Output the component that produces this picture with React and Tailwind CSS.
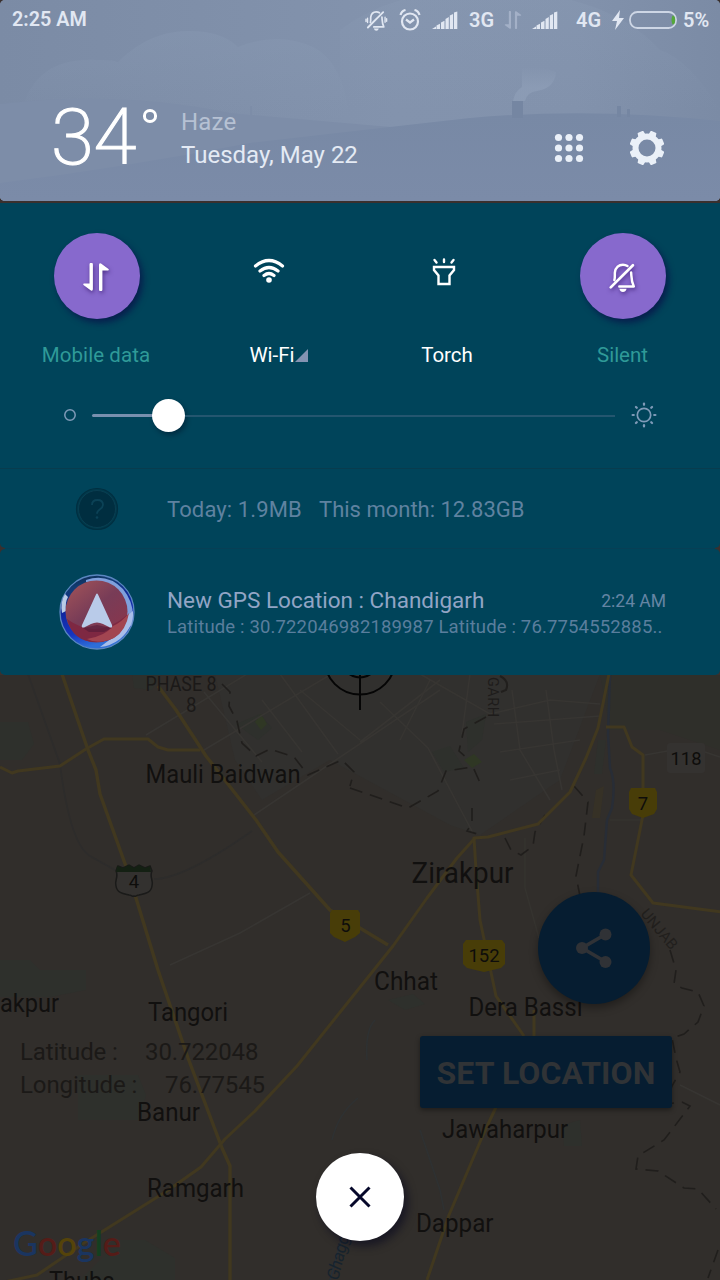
import React from "react";

const YELLOW = "#41381f";

const PLACES = [
  { t: "PHASE 8", x: 145.5, y: 691, s: 19.5, w: 71, c: "#1b1918" },
  { t: "8", x: 186, y: 712, s: 19.5, w: 10.5, c: "#1b1918" },
  { t: "Mauli Baidwan", x: 145.5, y: 783, s: 25.5, w: 155 },
  { t: "Zirakpur", x: 411.5, y: 883, s: 30, w: 102 },
  { t: "Chhat", x: 374, y: 990, s: 25.5, w: 64 },
  { t: "Dera Bassi", x: 468.500, y: 1016, s: 25.5, w: 114 },
  { t: "Tangori", x: 148, y: 1021, s: 25.5, w: 80 },
  { t: "akpur", x: 0, y: 1012, s: 25.5, w: 59 },
  { t: "Banur", x: 137, y: 1121, s: 25.5, w: 63 },
  { t: "Ramgarh", x: 147, y: 1197, s: 25.5, w: 97 },
  { t: "Jawaharpur", x: 442, y: 1138, s: 25.5, w: 126 },
  { t: "Dappar", x: 416, y: 1232, s: 25.5, w: 77.5 },
  { t: "Thuba", x: 49, y: 1290, s: 25.5, w: 66 },
];

function MapCanvas() {
  return (
    <svg className="absolute inset-0 h-full w-full font-['Roboto',sans-serif]" viewBox="0 0 720 1280">
      <rect width="720" height="1280" fill="#312e2b" />
      {/* urban area and greens */}
      <path d="M215 674H600L560 780 480 835 450 825 330 760 262 800 235 760Z" fill="#31302e" />
      <path d="M600 674H720V750L660 730 610 730Z" fill="#2f2f2a" />
      <g fill="#2e302c">
        <path d="M0 722h28l6 22-12 16H0z" />
        <path d="M0 960h30l10 10h46v20l-36 7H0z" />
        <path d="M78 1075h60l8 20-6 25H78z" />
        <path d="M120 1240h25l30 18v22H80z" />
        <path d="M132 674h28l-8 16-18-2zM236 724l24-10 12 14-14 12zM466 722l20-8-4 26-14 12zM432 752l18-6 14 22-20 4z" />
        <path d="M598 740h8l-4 34h-8zM562 1125l18-5 2 26h-18zM388 1000l25-6 12 10-20 6z" />
      </g>
      <path d="M255 722l6-8 6 10-6 6zM464 760l10-6 8 8-10 6z" fill="#2f3724" />
      <path d="M596 790l8-4-4 32h-8z" fill="#363126" />
      {/* minor streets */}
      <g fill="none" stroke="#373532" strokeWidth="1.6">
        <path d="M146 735 330 624M204 750 360 657M254 815 440 690M360 742 440 680M204 692 262 762M280 674 338 754M380 702l48 46 45 85M262 700l40 52M300 690l60 50" />
        <path d="M420 674l70 40 60-14 50 4M512 690l8 60 30 50M546 690l8 60 8 40M494 724l106-8M500 752l80-12M510 780l50-10M470 674l-8 60M430 680l-30 60" />
        <path d="M170 965l70-32 70-40M645 755l45-8 30 10" />
        <path d="M525 838v50l14 50M610 820h32" stroke="#35332f" />
        <path d="M28 674l32 90q10 80 30 92l25 14M154 879q30 0 98-48" stroke="#2d2c2b" />
        <path d="M420 1130l20 60 4 20M375 1020q-10 10-8 40M332 1140q6-26 26-42" stroke="#2e3132" />
        <path d="M680 1085l40 20" />
      </g>
      {/* river */}
      <path d="M610 674l-2 60 2 34q6 14 2 40l-5 12-3 40-6 12v20" fill="none" stroke="#282d36" strokeWidth="2.5" />
      <path d="M330 1280l14-50 10-40" fill="none" stroke="#273039" strokeWidth="1.5" />
      {/* boundary */}
      <g fill="none" stroke="#201e1c" strokeWidth="1.6" strokeDasharray="13 8">
        <path d="M222 684l8 8-1 14 8 15 5 22 14 13 14-7 24 8 14 18 34-15 12 12-4 14M350 788l58 20 30-17 8-20 27-4 8 18" />
        <path d="M486 717l-22 12-5 22 10 9M472 808v15l-5 8 14 4M505 838l6 12 10 5 12-9 2-14 10-17M574 786l14 16-4 34-8 40 4 20 8 20" />
        <path d="M670 950l6 20-2 14 8 4 16 4 6 14-6 16-14 12-12 4 4 20 4 14-8 14-6 18 16-2 8 4-26 34-26 16-2 13 22 2 26 17 14 1 18 20" />
        <path d="M718 1250l-10 28" />
      </g>
      {/* highways */}
      <g fill="none" stroke={YELLOW} strokeWidth="3" strokeLinejoin="round">
        <path d="M0 767l12 6 6-2 42-5 26-17 18-10h44l10 8 10 3h32" />
        <path d="M62 674l26 76 8 20 4 24 28 78 30 98 30 88 34 90 8 18v114" strokeWidth="3.400" />
        <path d="M158 686l18 24 30 46 50 64 22 32 52 58 58 35" strokeWidth="3.400" />
        <path d="M475 838l-18 20-30 40-34 48-48 60-48 60-42 45-30 28-24 28-34 24-80 50-50 34-37 8" />
        <path d="M609 674l-11 54-12 30-16 34-32 32-50 13-14 1 2 32 4 50 16 76 28 40" />
        <path d="M534 1010v30M497 1105l-14 30-34 80-22 65M606 727l18 0 8 20 11 8v60l-12 60 22 28 77 10" />
      </g>
      <g fill="#483d08">
        <path d="M631 788h24l2 4v17l-3 5-11 4-11-4-3-5v-17z" />
        <path d="M332 910h26l2 3v20l-5 4-10 5-11-5-4-4v-20z" />
        <path d="M466 940h36l3 4v20l-4 4-17 4-17-4-4-4v-20z" />
      </g>
      <rect x="667" y="743" width="38" height="30" rx="3" fill="#343230" />
      <path d="M118 866l5 2 6-3 5 3 5-3 6 3 5-2 2 5c-3 6 2 10 0 15-1 8-10 8-13 9-3 0-3 2-5 1-2 1-2-1-5-1-3-1-12-1-13-9-2-5 3-9 0-15z" fill="#33312f" stroke="#1a1a19" strokeWidth="1.500" />
      <path d="M117 866l6 2 6-3 5 3 5-3 6 3 5-2 1 6h-35z" fill="#142013" />
      <g fill="#0e0d0b" fontSize="18.5" textAnchor="middle">
        <text x="643" y="810">7</text>
        <text x="345.5" y="932">5</text>
        <text x="484" y="962">152</text>
        <text x="686" y="765" textLength="31" lengthAdjust="spacingAndGlyphs">118</text>
        <text x="134" y="888">4</text>
      </g>
      {PLACES.map((p) => (
        <text key={p.t} x={p.x} y={p.y} fontSize={p.s} fill={p.c || "#11100f"} textLength={p.w} lengthAdjust="spacingAndGlyphs">
          {p.t}
        </text>
      ))}
      <text transform="translate(488 677) rotate(90)" fontSize="14.5" fill="#1e1c1b" textLength="40">GARH</text>
      <text transform="translate(640 914) rotate(50)" fontSize="15" fill="#211f1d" textLength="48">UNJAB</text>
      <text transform="translate(338 1281) rotate(-76)" fontSize="17" fontStyle="italic" fill="#17232d" textLength="46">Ghagg</text>
      <path d="M500 676q10 5 6 14l-5 2" fill="none" stroke="#211f1d" strokeWidth="2" />
      {/* centre target */}
      <g fill="none" stroke="#050505" strokeWidth="2">
        <circle cx="360" cy="659" r="35.5" />
        <circle cx="360" cy="659" r="18.5" />
        <path d="M360 659v51" />
      </g>
      <text x="13" y="1256" className="font-['Lato',sans-serif]" fontSize="35" fontWeight="600" textLength="108" lengthAdjust="spacingAndGlyphs">
        <tspan fill="#1a3560">G</tspan>
        <tspan fill="#551c18">o</tspan>
        <tspan fill="#55430a">o</tspan>
        <tspan fill="#1a3560">g</tspan>
        <tspan fill="#143f20">l</tspan>
        <tspan fill="#551c18">e</tspan>
      </text>
    </svg>
  );
}

function MapApp() {
  return (
    <div className="absolute inset-0">
      <MapCanvas />
      <div className="relative flex h-full flex-col pt-[892px]">
        <div className="ml-[538px] flex h-28 w-28 items-center justify-center rounded-full bg-[#061d31] shadow-[0_4px_8px_rgba(0,0,0,0.35)]">
          <svg className="h-10 w-10" viewBox="0 0 40 40" fill="#303236">
            <path d="M32 6 8 20l24 14" fill="none" stroke="#303236" strokeWidth="3.6" />
            <circle cx="31.5" cy="6.500" r="6" />
            <circle cx="8" cy="20" r="6" />
            <circle cx="31.500" cy="34" r="6" />
          </svg>
        </div>
        <div className="mt-8 flex items-start pl-[20px]">
          <div className="w-[400px] whitespace-pre text-[24px] leading-[33px] tracking-[-0.1px] text-[#1b1917]">
            <div className="flex"><span className="w-[125px]">Latitude :</span><span>30.722048</span></div>
            <div className="flex"><span className="w-[145px]">Longitude :</span><span>76.77545</span></div>
          </div>
          <button className="h-[72px] w-[252px] rounded-[3px] bg-[#061d31] pt-[2px] text-[32px] font-bold tracking-[0.1px] text-[#303336] shadow-[0_2px_5px_rgba(0,0,0,0.4)]">
            SET LOCATION
          </button>
        </div>
      </div>
    </div>
  );
}

function BellOff({ className, waves }) {
  return (
    <svg className={className} viewBox="0 0 32 32" fill="none" stroke="currentColor" strokeWidth="2.700" strokeLinecap="round">
      <path d="M7 20C8 17 7.300 14 7.600 11.500 8.300 6 12 3 16.500 3q2.800 0 5 1.500" />
      <path d="M25.500 11.500c.5 4-.2 9 3 15.500H12.500" strokeLinejoin="round" />
      <path d="M27.500 3.500 3 28" strokeWidth="3" />
      <path d="M12.500 29.500h8q-1 3.500-4 3.500t-4-3.500z" fill="currentColor" stroke="none" />
      {waves && <path d="M2.500 13v7M0 14.500v4M30.500 11.500v8M33 14v4" strokeWidth="2.200" />}
    </svg>
  );
}

function DataArrows({ className }) {
  return (
    <svg className={className} viewBox="0 0 26 28" fill="currentColor">
      <path d="M6.500 1.500a1.700 1.700 0 0 1 3.400 0V26q0 2.500-2 1.500L.5 22q-.8-1 .5-1.500H6.500zM16 26.500a1.700 1.700 0 0 0 3.400 0V7.500h5.600q1.300-.5.5-1.500L18 .500q-2-1-2 1.500z" />
    </svg>
  );
}

function Signal() {
  return (
    <svg className="h-[19px] w-[26px] shrink-0" viewBox="0 0 26 19" fill="currentColor">
      <path d="M0 18l4-2.500V18zM4.500 14.500l3.500-1.700V18H4.500zM9 11.500l3.500-1.700V18H9zM13.500 8l3.300-2V18h-3.300zM17.800 4.500l3.300-1.500V18h-3.300zM22 1.500l3.300-1V18H22z" />
    </svg>
  );
}

function StatusBar() {
  return (
    <div className="relative flex h-10 items-center pl-3 text-[20px] font-semibold text-[#e1e7f2]">
      <span className="w-[354px] text-[19.8px]">2:25 AM</span>
      <BellOff className="h-[20px] w-[20px] overflow-visible" waves />
      <svg className="ml-[13px] h-[22px] w-[22px]" viewBox="0 0 22 22" fill="none" stroke="currentColor" strokeWidth="2.200">
        <circle cx="11" cy="12.500" r="8" />
        <path d="M7 10.500l4 3 4-3M1.500 6q1-4 5-5M20.500 6q-1-4-5-5" />
      </svg>
      <div className="ml-[11px]"><Signal /></div>
      <span className="ml-[11px] w-[35px]">3G</span>
      <DataArrows className="h-[18px] w-[18px] text-[#a3b0c7]" />
      <div className="ml-[10px]"><Signal /></div>
      <span className="ml-[18px] w-[36px]">4G</span>
      <svg className="h-[20px] w-[12px]" viewBox="0 0 12 20" fill="currentColor">
        <path d="M8 0 0 11h5L3 20l9-12H7z" />
      </svg>
      <svg className="ml-[5px] h-[18px] w-[48px]" viewBox="0 0 48 18">
        <rect x="1" y="1" width="46" height="16" rx="7.500" fill="none" stroke="#cdd6e5" strokeWidth="1.800" />
        <path d="M43.500 4.500q2.700 0 2.700 4.500t-2.700 4.500q-2-4.500 0-9z" fill="#54a83a" />
      </svg>
      <span className="ml-[6px]">5%</span>
    </div>
  );
}

function WeatherHeader() {
  return (
    <header className="relative h-[201px] overflow-hidden rounded-[5px] bg-[#7e8da7]">
      <svg className="absolute inset-0 h-full w-full" viewBox="0 0 720 201">
        <defs>
          <linearGradient id="sky" x1="0" x2="1">
            <stop offset="0" stopColor="#7b8ba5" />
            <stop offset=".55" stopColor="#8393ad" />
            <stop offset=".8" stopColor="#8292ac" />
            <stop offset="1" stopColor="#7b8ba5" />
          </linearGradient>
          <linearGradient id="land" x1="0" x2="0" y1="0" y2="1">
            <stop offset="0" stopColor="#7889a5" />
            <stop offset="1" stopColor="#7b8ba8" />
          </linearGradient>
          <linearGradient id="cloud" x1="0" x2="0" y1="0" y2="1">
            <stop offset="0" stopColor="#8b9cb5" stopOpacity=".32" />
            <stop offset="1" stopColor="#8b9cb5" stopOpacity="0" />
          </linearGradient>
          <linearGradient id="smoke" x1="0" x2="0" y1="0" y2="1">
            <stop offset="0" stopColor="#8d9db6" stopOpacity="0" />
            <stop offset=".6" stopColor="#8d9db6" stopOpacity=".8" />
          </linearGradient>
        </defs>
        <rect width="720" height="201" fill="url(#sky)" />
        <path d="M20 120Q30 55 100 60q14 0 18 2Q150 30 190 31q32 0 48 16 40-16 75 0 30 14 37 73z" fill="url(#cloud)" />
        <path d="M340 30Q400-15 500-10q110 5 160 60 30 10 60 60H340z" fill="url(#cloud)" />
        <path d="M0 104Q120 90 230 113l20 2v-9h2v9l150 13 318 20v53H0z" fill="#7d8da8" />
        <path d="M0 201v-18q120-15 250-40Q380 128 470 118 590 107 720 121v80z" fill="url(#land)" />
        <path d="M512 101h11v17h-11zM617 106h4v11h-4zM627 109h3v8h-3z" fill="#7586a2" />
        <path d="M513 101q2-10 9-14V68q15-4 34 4-1 16-19 19-10 1-12 10z" fill="url(#smoke)" />
      </svg>
      <StatusBar />
      <div className="relative flex pl-[51px] text-[#e4eaf4]">
        <div className="mt-[53px] flex w-[130px] text-white">
          <span className="text-[78px] font-extralight leading-[90px] tracking-[-0.5px] [-webkit-text-stroke:1.1px_white]">34</span>
          <svg className="ml-[6px] mt-[15px] h-4 w-4" viewBox="0 0 16 16" fill="none" stroke="white" strokeWidth="3">
            <circle cx="8" cy="8" r="5.600" />
          </svg>
        </div>
        <div className="mt-[66px] w-[373px] text-[24px] leading-[33px]">
          <div className="tracking-[0.2px] text-[#b6c1d3]">Haze</div>
          <div>Tuesday, May 22</div>
        </div>
        <svg className="mt-[93px] h-[30px] w-[30px]" viewBox="-15 -15 30 30" fill="#eaf0f8">
          {[-10.5, 0, 10.5].map((y) => [-10.5, 0, 10.5].map((x) => <circle key={`${x},${y}`} cx={x} cy={y} r="3.600" />))}
        </svg>
        <svg className="ml-[46px] mt-[91px] h-[34px] w-[34px]" viewBox="-17 -17 34 34" fill="#eaf0f8">
          <circle r="11.500" fill="none" stroke="#eaf0f8" strokeWidth="6" />
          {[22.5, 67.5, 112.5, 157.5, 202.5, 247.5, 292.5, 337.5].map((a) => (
            <path key={a} d="M-4-12l.8-4.500q0-1 1-1h4.400q1 0 1 1L4-12z" transform={`rotate(${a})`} />
          ))}
        </svg>
      </div>
    </header>
  );
}

function Tile({ label, active, children, labelClass = "", iconClass = "" }) {
  return (
    <div className="flex flex-col items-center">
      <div className={"flex h-[86px] w-[86px] items-center justify-center rounded-full " + (active ? "bg-[#8769cd] shadow-[3px_4px_6px_rgba(10,10,70,0.65)] " : "") + iconClass}>
        {children}
      </div>
      <div className={"mt-[22px] flex items-baseline whitespace-nowrap text-[20.5px] leading-7 " + (active ? "text-[#2f9a98] " : "text-white ") + labelClass}>
        {label}
      </div>
    </div>
  );
}

function QuickSettings() {
  return (
    <section className="mt-[2px] h-[266px] border-b border-[#083c4e] bg-[#00445a]">
      <div className="grid grid-cols-4 px-[10px] pt-[30px]">
        <Tile active label="Mobile data" labelClass="mr-[3px] tracking-[0.1px]" iconClass="mr-[2px]">
          <DataArrows className="mr-[2px] mt-[1px] h-7 w-[26px] text-white drop-shadow-[1px_2px_2px_rgba(40,10,90,0.6)]" />
        </Tile>
        <Tile
          labelClass="ml-[12px]"
          label={<>Wi-Fi<svg className="h-[13px] w-[13px]" viewBox="0 0 13 13"><path d="M13 0v13H0z" fill="#8493b2" /></svg></>}
        >
          <svg className="-mt-[12px] mr-[8px] h-[26px] w-[32px]" viewBox="0 0 32 26" fill="none" stroke="white" strokeWidth="3.200" strokeLinecap="round">
            <path d="M2.500 9Q16-2 29.500 9M7 14q9-7 18 0M11 18.500q5-4 10 0" />
            <circle cx="16" cy="23" r="2.800" fill="white" stroke="none" />
          </svg>
        </Tile>
        <Tile label="Torch" labelClass="mr-[1px]">
          <svg className="-mt-[8px] mr-[8px] h-[28px] w-[24px]" viewBox="0 0 24 28" fill="none" stroke="white" strokeWidth="2.400" strokeLinecap="round">
            <path d="M2 9h20v3l-4.500 5.500V26h-11v-8.500L2 12z" strokeLinecap="butt" />
            <path d="M2.500 2l2 2.500M12 1.500v2.500M21.500 2l-2 2.500" />
          </svg>
        </Tile>
        <Tile active label="Silent">
          <BellOff className="h-[29px] w-[29px] overflow-visible text-white drop-shadow-[1px_2px_2px_rgba(40,10,90,0.6)]" />
        </Tile>
      </div>
      <div className="mt-[26px] flex h-[40px] items-center pl-[63px] text-[#7f9bb8]">
        <svg className="h-[14px] w-[14px]" viewBox="0 0 14 14"><circle cx="7" cy="7" r="5.200" fill="none" stroke="currentColor" strokeWidth="1.500" /></svg>
        <div className="ml-[15px] flex h-8 w-[523px] items-center">
          <div className="mt-px h-[3px] w-[61px] rounded-l bg-[#7890ae]" />
          <div className="-ml-px h-[33px] w-[33px] rounded-full bg-white shadow-[2px_3px_5px_rgba(0,10,30,0.4)]" />
          <div className="mt-[2px] h-[2px] flex-1 bg-[#24566f]" />
        </div>
        <svg className="ml-[16px] h-[26px] w-[26px]" viewBox="-13 -13 26 26" fill="none" stroke="currentColor" strokeWidth="1.700" strokeLinecap="round">
          <circle r="6.700" />
          {[0, 45, 90, 135, 180, 225, 270, 315].map((a) => (
            <path key={a} d="M0-10.200v-1.200" strokeWidth="2.200" transform={`rotate(${a})`} />
          ))}
        </svg>
      </div>
    </section>
  );
}

function DataUsage() {
  return (
    <section className="flex h-[79px] items-center rounded-b-[5px] bg-[#00445a] pl-[75px] text-[22px] text-[#5f82a0]">
      <svg className="h-[44px] w-[44px]" viewBox="0 0 44 44">
        <circle cx="22" cy="22" r="20.500" fill="#003a4c" stroke="#002f41" strokeWidth="1.200" />
        <circle cx="22" cy="22" r="18.500" fill="#002e40" stroke="#0a3e51" strokeWidth="1" />
        <path d="M17 18q0-5 5.500-5t5.500 4.700q0 2.500-3 4.500t-3 4.500" fill="none" stroke="#0b4256" strokeWidth="1.800" />
        <circle cx="22" cy="30.500" r="1.300" fill="#0b4256" />
      </svg>
      <span className="ml-[48px] w-[152px] pt-[2px] tracking-[0.12px]">Today: 1.9MB</span>
      <span className="pt-[2px]">This month: 12.83GB</span>
    </section>
  );
}

function GpsIcon() {
  return (
    <svg className="h-[76px] w-[76px] shrink-0" viewBox="0 0 76 76">
      <defs>
        <linearGradient id="rim" x1="0" y1="0" x2=".25" y2="1">
          <stop offset="0" stopColor="#08203f" />
          <stop offset=".2" stopColor="#123c72" />
          <stop offset=".5" stopColor="#1028a0" />
          <stop offset=".8" stopColor="#1635c0" />
          <stop offset="1" stopColor="#2e6ed8" />
        </linearGradient>
        <linearGradient id="ball" x1="0" y1="0" x2=".8" y2="1">
          <stop offset="0" stopColor="#a55559" />
          <stop offset=".5" stopColor="#783c57" />
          <stop offset="1" stopColor="#8b354b" />
        </linearGradient>
      </defs>
      <circle cx="38" cy="38" r="37" fill="url(#rim)" stroke="#5a86c0" strokeWidth="1.300" />
      <path d="M27 6Q48-1 64 15q13 16 9 36L60 61q12-22 2-38Q50 6 27 8z" fill="#7fa0dc" />
      <path d="M74 37q1 16-13 28-9 7-20 8l8-6q16-10 20-26z" fill="#a8bee9" />
      <path d="M6 20Q1 28 3 39l4-2q-1-9 2-14z" fill="#b9cce8" />
      <circle cx="37.500" cy="37.500" r="31" fill="url(#ball)" />
      <path d="M8 45q30 22 60-4-4 27-31 27Q14 68 8 45z" fill="#7e2842" />
      <path d="M54 52q9-4 16-13-3 18-15 25-16 7-27 1 18-3 26-13z" fill="#a24551" />
      <path d="M24 54l14-3 15 3-8 4H30z" fill="#521b38" opacity=".6" />
      <path d="M37 20.500q1-2 2 0L53 51q.8 3-2 2.500l-7-3.500q-6-3-12 0l-7 3.500q-3 .5-2-2.500z" fill="#b9cbe9" />
    </svg>
  );
}

function GpsNotification() {
  return (
    <section className="flex h-[126px] items-center rounded-[5px] bg-[#00445a] pl-[59px]">
      <GpsIcon />
      <div className="ml-[32px] w-[499px]">
        <div className="flex items-baseline justify-between">
          <span className="text-[22.500px] leading-7 text-[#92a5c5]">New GPS Location : Chandigarh</span>
          <span className="relative -top-px text-[17.500px] text-[#6585a4]">2:24 AM</span>
        </div>
        <div className="whitespace-nowrap text-[18.500px] leading-[22px] tracking-[0.150px] text-[#5a7e9d]">
          Latitude : 30.722046982189987 Latitude : 76.7754552885..
        </div>
      </div>
    </section>
  );
}

export default function App() {
  return (
    <div className="relative h-[1280px] w-[720px] overflow-hidden bg-[#312e2b] font-['Roboto',sans-serif]">
      <MapApp />
      <div className="relative flex h-full flex-col">
        <div className="bg-[#3a302e]">
          <WeatherHeader />
          <QuickSettings />
          <DataUsage />
          <div className="mx-[5px] h-px bg-[#073f55]" />
          <GpsNotification />
        </div>
        <button aria-label="Close" className="mx-auto mt-[478px] flex h-[88px] w-[88px] shrink-0 items-center justify-center rounded-full bg-white shadow-[4px_5px_9px_rgba(10,10,30,0.65)]">
          <svg className="h-[22px] w-[22px]" viewBox="0 0 22 22" fill="none" stroke="#06082a" strokeWidth="3">
            <path d="M1.500 1.500l19 19M20.500 1.500l-19 19" />
          </svg>
        </button>
      </div>
    </div>
  );
}
